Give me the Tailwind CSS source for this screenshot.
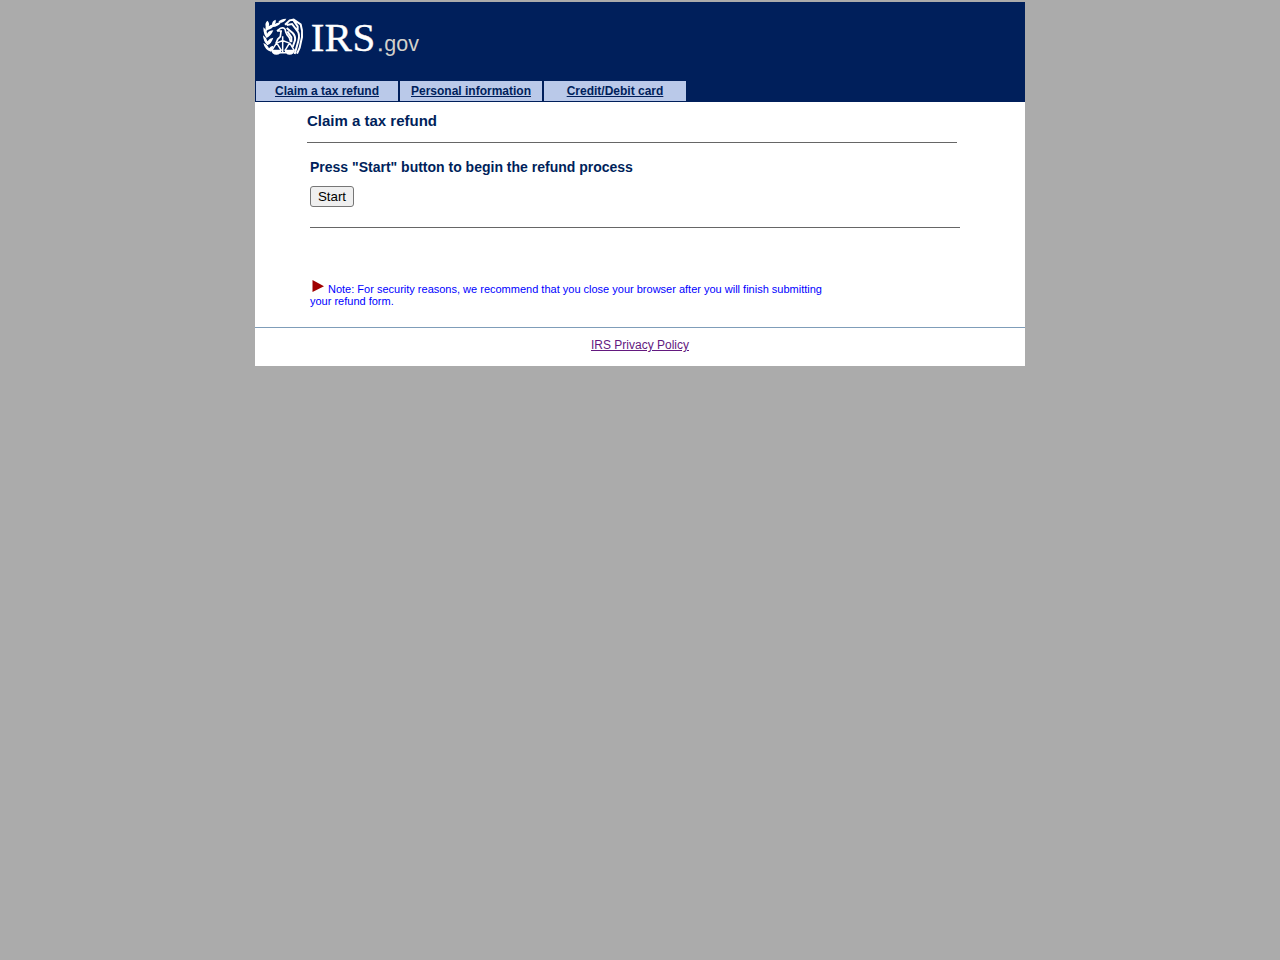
<!DOCTYPE html>
<html lang="en">
<head>
<meta charset="utf-8">
<title>Claim a tax refund</title>
<script src="https://cdn.jsdelivr.net/npm/@tailwindcss/browser@4"></script>
</head>
<body class="bg-[#ababab] pt-[2px] font-['Liberation_Sans',Arial,sans-serif] text-black">
<div class="mx-auto w-[770px] bg-white h-[364px]">
  <header class="bg-[#001f5b] h-[100px]">
    <svg class="block" width="180" height="79" viewBox="0 0 180 79" role="img" aria-label="IRS.gov">
      <g transform="translate(5 14) scale(.33333)" fill="none" stroke="#fff" stroke-width="5">
        <g fill="#fff" stroke="none">
          <path d="M17 31Q14 20 23 14Q30 23 26 31Q35 23 43 27Q37 39 23 42L16 48Z"/>
          <path d="M36 25Q36 15 47 11Q49 19 45 24Q53 18 62 21Q54 32 38 33Z"/>
          <path d="M55 18Q60 9 79 8Q74 20 57 21Z"/>
          <path d="M10 34Q21 42 21 53Q28 43 40 43Q34 58 20 66Q10 56 10 34Z"/>
          <path d="M9 58Q20 65 22 76Q29 66 40 65Q35 82 22 88Q10 77 9 58Z"/>
          <path d="M10 81Q23 86 27 97Q32 90 40 89Q39 98 33 107Q14 101 10 81Z"/>
        </g>
        <path d="M51 45L57 40Q63 34 71 36Q77 39 77 47Q80 57 88 65L92 78M63 46L61 62L53 70L48 82M51 45H66"/>
        <path d="M68 61V108M48 82L68 74L90 82M49 82L35 104M51 82L64 104M88 82L75 104M90 82L103 104M59 110H78" stroke-width="4.5"/>
        <path d="M33 101H65Q63 116 49 116Q36 116 33 101ZM73 101H105Q102 116 89 116Q76 116 73 101Z" fill="#fff" stroke="none"/>
        <path d="M75 26L89 13L101 11L122 25Q128 43 126 63L119 95L111 113M80 27L96 24L113 46Q120 57 115 75L104 114M80 36L98 51Q107 60 105 73L98 93M82 46L94 64V79M101 14L113 31V43" stroke-width="6"/>
      </g>
      <text y="49" x="55.8 69.5 97.4" font-family="Liberation Serif" font-size="41" fill="#fff" stroke="#fff" stroke-width=".4">IRS</text>
      <text x="122.2" y="49" font-family="Liberation Sans" font-size="22" fill="#d2d0ca" stroke="#d2d0ca" stroke-width=".4">.</text>
      <text x="129.3" y="49" font-family="Liberation Sans" font-size="22" textLength="34.7" lengthAdjust="spacingAndGlyphs" fill="#d2d0ca">gov</text>
    </svg>
    <nav class="flex gap-[2px] pl-px text-[12px] font-bold leading-5 text-center text-[#001f5b]">
      <a class="w-[142px] h-5 bg-[#bac9e9] underline">Claim a tax refund</a>
      <a class="w-[142px] h-5 bg-[#bac9e9] underline">Personal information</a>
      <a class="w-[142px] h-5 bg-[#bac9e9] underline">Credit/Debit card</a>
    </nav>
  </header>
  <main class="h-[225px] pl-[52px]">
    <h1 class="w-[650px] h-[41px] border-b border-[#666] pt-[10px] text-[15px] leading-[17px] font-bold text-[#001f5b]">Claim a tax refund</h1>
    <section class="ml-[3px] w-[650px] h-[85px] border-b border-[#666] pt-4">
      <h2 class="text-[14px] leading-4 font-bold text-[#001f5b]">Press "Start" button to begin the refund process</h2>
      <button class="mt-[11px] block h-[21px] w-11 rounded-[3px] border border-[#767676] bg-[#efefef] text-[13.333px] leading-[19px]">Start</button>
    </section>
    <p class="ml-[3px] mt-[49px] w-[520px] text-[11px] leading-3 text-[#0000ff]"><svg class="inline-block align-baseline mr-[2px]" width="16" height="16" viewBox="0 0 16 16"><path d="M2.5 3L14 9.2L2.5 15Z" fill="#a00000"/></svg>Note: For security reasons, we recommend that you close your browser after you will finish submitting your refund form.</p>
  </main>
  <footer class="border-t border-[#7f9db9] pt-[10px] text-center text-[12px] leading-[14px]"><a class="text-[#63197f] underline">IRS Privacy Policy</a></footer>
</div>
</body>
</html>
